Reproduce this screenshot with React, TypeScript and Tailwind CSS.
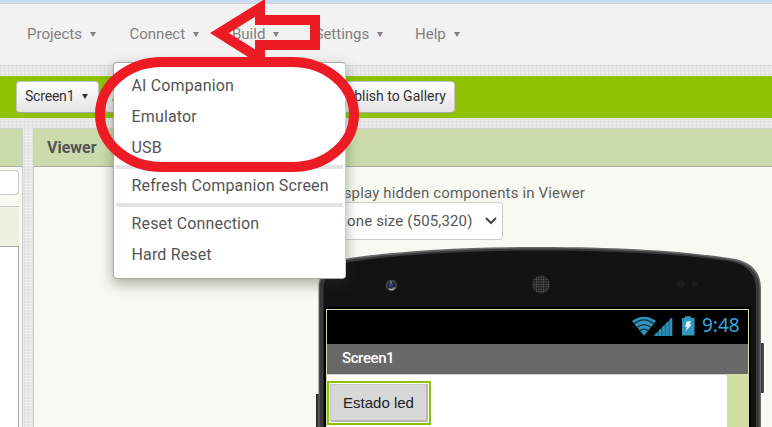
import React from 'react';

function Caret({ className = '' }: { className?: string }) {
  return (
    <svg viewBox="0 0 6 5" className={`h-[5px] w-[6px] shrink-0 ${className}`}>
      <path d="M0 0H6L3 5Z" fill="currentColor" />
    </svg>
  );
}

function NavItem({ label, width }: { label: string; width: string }) {
  return (
    <div className={`flex shrink-0 items-center gap-2 ${width}`}>
      <span>{label}</span>
      <Caret />
    </div>
  );
}

function ToolButton({ className = '', children }: { className?: string; children: React.ReactNode }) {
  return (
    <div
      className={`flex h-8 shrink-0 items-center overflow-hidden rounded-[4px] border border-[#c4c4c4] border-b-[#a8a8a8] bg-linear-to-b from-white to-[#e4e4e4] whitespace-nowrap text-[#333] ${className}`}
    >
      {children}
    </div>
  );
}

function MenuItem({ children }: { children: React.ReactNode }) {
  return <div className="flex h-[31px] items-center pl-[17.5px] whitespace-nowrap">{children}</div>;
}

function Separator() {
  return <div className="mx-[2px] my-[1.5px] h-1 bg-[#e3e3e3]" />;
}

function ConnectMenu() {
  return (
    <div className="absolute top-[62px] left-[113px] h-[217px] w-[233px] rounded-[4px] border border-[#a9a9a9] border-r-[#ccc] bg-white pt-[7px] text-[16px] tracking-[0.15px] text-[#555] shadow-[0_5px_14px_rgba(40,60,30,0.4)]">
      <MenuItem>AI Companion</MenuItem>
      <MenuItem>Emulator</MenuItem>
      <MenuItem>USB</MenuItem>
      <Separator />
      <MenuItem>Refresh Companion Screen</MenuItem>
      <Separator />
      <MenuItem>Reset Connection</MenuItem>
      <MenuItem>Hard Reset</MenuItem>
    </div>
  );
}

function PhoneFrame() {
  return (
    <svg className="absolute top-0 left-0 h-[181px] w-[450px]" viewBox="316 246 450 181">
      <defs>
        <pattern id="grille" width="2.4" height="2.4" patternUnits="userSpaceOnUse">
          <rect width="2.4" height="2.4" fill="#1b1b1b" />
          <circle cx="1.2" cy="1.2" r="0.75" fill="#666" />
        </pattern>
        <linearGradient id="key" x1="0" x2="1">
          <stop offset="0" stopColor="#222" />
          <stop offset="1" stopColor="#555" />
        </linearGradient>
      </defs>
      <rect x="316" y="394" width="4" height="40" fill="url(#key)" />
      <rect x="760" y="343" width="4" height="50" rx="1" fill="url(#key)" />
      <path
        d="M318.5 430V287C319 273 329 263 344 259C400 250 470 247 540 247C620 247 685 251 732 258.500C751 261 761 272 761 288V430Z"
        fill="#68686b"
      />
      <path
        d="M319.500 430V288C320 275 330 264.500 345 260.500C401 252 470 248.500 540 248.500C620 248.500 685 252.500 731 260C749 263 759.500 273 759.500 289V430Z"
        fill="#3a3a3c"
      />
      <path
        d="M323.500 430V288C324 277 331 267 346 262.500C401 254 470 250.500 540 250.500C620 250.500 685 254.500 730 261.500C748 264.500 756 275 756 290V430Z"
        fill="#131313"
      />
      <rect x="324" y="307" width="427" height="125" fill="#000" />
      <circle cx="391.500" cy="285.500" r="5.700" fill="#45454a" />
      <circle cx="391.500" cy="285.500" r="4" fill="#25252d" />
      <circle cx="391" cy="285" r="2.200" fill="#383b8c" />
      <path d="M389 288.500Q392 291 394.500 287.500" stroke="#aaa" strokeWidth="1.400" fill="none" />
      <circle cx="391" cy="282.500" r="1" fill="#888" />
      <circle cx="541" cy="284.500" r="9" fill="url(#grille)" />
      <circle cx="680.500" cy="284" r="4" fill="#1c1c1c" />
      <circle cx="694.500" cy="284" r="3" fill="#1c1c1c" />
    </svg>
  );
}

function StatusIcons() {
  return (
    <svg className="h-5 w-[64px] shrink-0" viewBox="631 315 64 20">
      <path d="M632 320Q644 311.500 656 320L644 334.800Z" fill="#2f93bc" />
      <g fill="none" stroke="#0a2836" strokeWidth="1.200">
        <path d="M633.500 323.300Q644 314.500 654.500 323.300" />
        <path d="M636.300 326.900Q644 320.200 651.700 326.900" />
        <path d="M639 330.300Q644 325.800 649 330.300" />
      </g>
      <path d="M653.500 335L672.300 316V335Z" fill="#1f6e90" />
      <path d="M656.500 335v-3M660 335v-6.500M663.700 335v-10M667.300 335v-13.800M671 335v-17.500" stroke="#2f93bc" strokeWidth="2.200" />
      <path d="M682 317H685V315.300H691V317H694.500V334.500H682Z" fill="#3095bf" />
      <path d="M686.500 320.500L691 320L689.500 323.500H691.700L685.500 330.500L687 326H685Z" fill="#e6f5fb" />
    </svg>
  );
}

function Phone() {
  return (
    <div className="relative ml-[282px] h-[181px] w-[450px] pt-[63px] pl-[10px]">
      <PhoneFrame />
      <div className="relative h-[118px] w-[423px] border border-b-0 border-[#d1dfa2] bg-[#d1dfa2]">
        <div className="flex h-[34px] items-center bg-black pb-[3px] pl-[304px] font-['Noto_Sans',sans-serif] text-[19px] text-[#35a9dd]">
          <StatusIcons />
          <span className="ml-[7px]">9:48</span>
        </div>
        <div className="flex h-[30px] items-center bg-[#696969] pb-[2px] pl-[15px] text-[15px] font-medium tracking-[-0.400px] text-white">
          Screen1
        </div>
        <div className="h-[53px] w-[400px] border-t border-[#ccc] bg-white pt-[6px]">
          <div className="h-11 w-[104px] border-2 border-[#8fc202] bg-white p-px">
            <div className="flex h-[38px] items-center justify-center border border-r-2 border-b-2 border-[#c5c6c6] border-r-[#b8b9b9] border-b-[#b8b9b9] bg-[#d6d7d7] pt-px font-['Liberation_Sans',Arial,sans-serif] text-[15px] text-[#222]">
              Estado led
            </div>
          </div>
        </div>
      </div>
    </div>
  );
}

function Annotations() {
  return (
    <svg className="pointer-events-none absolute top-0 left-0 h-[427px] w-[772px]" viewBox="0 0 772 427">
      <g fill="none" stroke="#ed1c24" strokeWidth="10" strokeMiterlimit="10">
        <rect x="100" y="62" width="254" height="105" rx="62" ry="52.500" />
        <path d="M219.500 33L260 8V20H315V45H260V58.500Z" />
      </g>
    </svg>
  );
}

export default function App() {
  return (
    <div className="relative flex h-[427px] w-[772px] flex-col overflow-hidden bg-[#e7e7e7] bg-[repeating-linear-gradient(0deg,rgba(255,255,255,0.28)_0_1px,transparent_1px_3px),repeating-linear-gradient(90deg,rgba(150,150,150,0.1)_0_1px,transparent_1px_4px)] font-['Roboto',sans-serif]">
      <div className="h-[3px] shrink-0 bg-[#cbdcf7]" />
      <nav className="flex h-[63px] shrink-0 items-center border-y border-[#d3d3d3] bg-[#f2f2f2] pl-[27px] text-[15px] text-[#808080]">
        <NavItem label="Projects" width="w-[102.500px]" />
        <NavItem label="Connect" width="w-[102.500px]" />
        <NavItem label="Build" width="w-[82.500px]" />
        <NavItem label="Settings" width="w-[100.500px]" />
        <NavItem label="Help" width="w-[80px]" />
      </nav>
      <div className="mt-[10px] flex h-[42px] shrink-0 items-center gap-[6px] bg-[#8fc202] pb-px pl-4 text-[14px]">
        <ToolButton className="w-[83px] gap-2 pl-2">
          <span className="tracking-[-0.200px]">Screen1</span>
          <Caret />
        </ToolButton>
        <ToolButton className="w-[104px] pl-[6px]">Add Screen ...</ToolButton>
        <ToolButton className="w-[97px] pl-[7px] text-[13px]">Remove Screen</ToolButton>
        <ToolButton className="w-[137px] justify-end pr-2">Publish to Gallery</ToolButton>
      </div>
      <main className="mt-[10px] flex min-h-0 flex-1 gap-[10px]">
        <aside className="flex w-[23px] shrink-0 flex-col border-t border-r border-[#cfcfcf] bg-[#f8f9f3]">
          <div className="h-[38px] shrink-0 border-b border-[#adb39c] bg-[#cbdbab]" />
          <div className="mt-[3px] h-[25px] w-[19px] shrink-0 rounded-r-[4px] border border-l-0 border-[#c8c8c8] bg-white" />
          <div className="mt-[11px] h-10 w-[19px] shrink-0 border-t border-[#ccc] bg-[#edf1df]" />
          <div className="w-[19px] flex-1 border-t border-r border-[#aaa] bg-white" />
        </aside>
        <section className="min-w-0 flex-1 overflow-hidden border-t border-l border-[#cfcfcf] bg-[#f8f9f3]">
          <h2 className="flex h-[38px] items-center border-b border-[#a9ab9f] bg-[#cbdbab] pl-[13px] text-[16px] font-bold text-[#555]">
            Viewer
          </h2>
          <div className="flex h-[35px] items-end justify-end pr-[187px] text-[15px] tracking-[0.160px] whitespace-nowrap text-[#606060]">
            <input type="checkbox" className="mr-1 mb-1 h-3 w-3" />
            <span className="-mb-[2px]">Display hidden components in Viewer</span>
          </div>
          <div className="ml-[270px] flex h-[38px] w-[199px] items-center justify-between rounded-[4px] border border-[#ccc] bg-white pr-[5px] pl-[24px] text-[15px] tracking-[0.150px] text-[#555]">
            <span>Phone size (505,320)</span>
            <svg viewBox="0 0 12 8" className="h-2 w-3">
              <path d="M1 1L6 6L11 1" fill="none" stroke="#444" strokeWidth="2" />
            </svg>
          </div>
          <div className="pt-[6px]">
            <Phone />
          </div>
        </section>
      </main>
      <ConnectMenu />
      <Annotations />
    </div>
  );
}
